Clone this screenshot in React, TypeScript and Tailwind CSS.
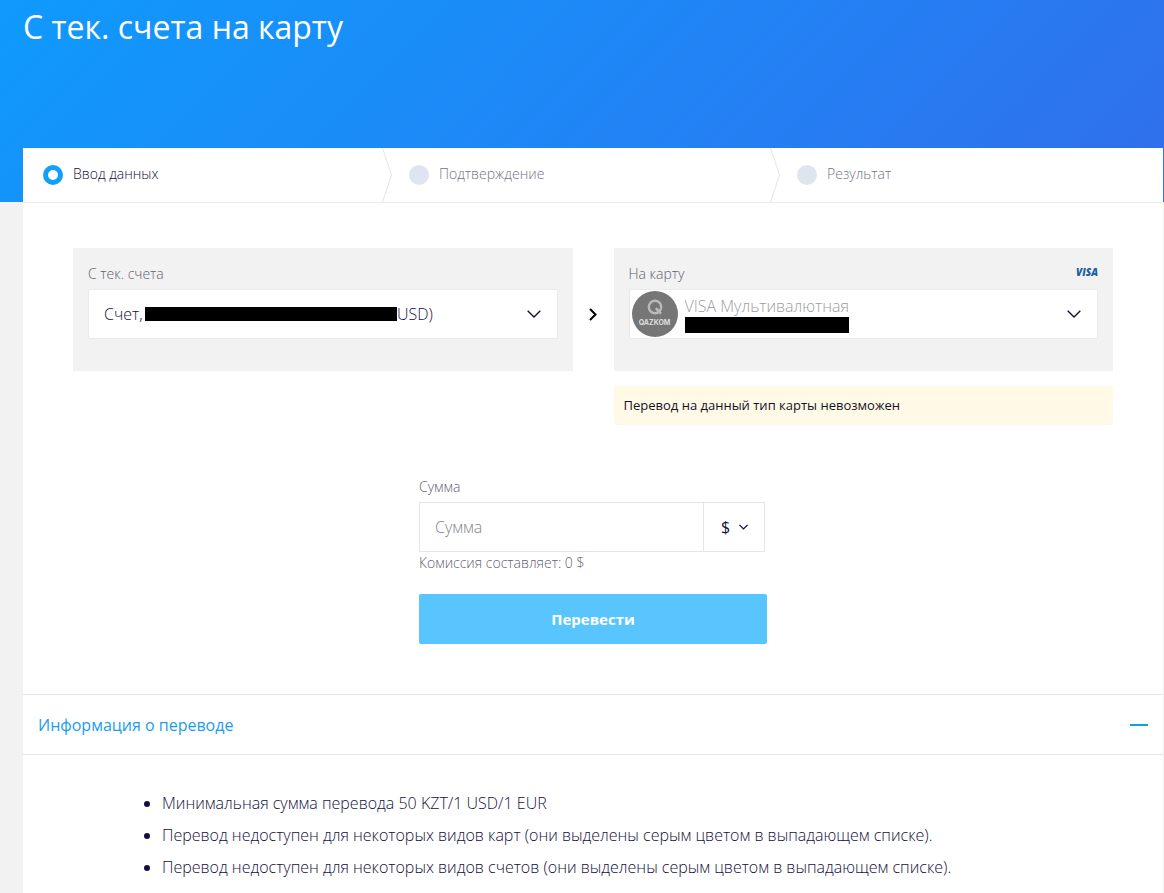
import { useState } from "react";

interface StepProps {
  title: string;
  active?: boolean;
  last?: boolean;
}

const steps: StepProps[] = [
  { title: "Ввод данных", active: true },
  { title: "Подтверждение" },
  { title: "Результат", last: true },
];

const notes = [
  "Минимальная сумма перевода 50 KZT/1 USD/1 EUR",
  "Перевод недоступен для некоторых видов карт (они выделены серым цветом в выпадающем списке).",
  "Перевод недоступен для некоторых видов счетов (они выделены серым цветом в выпадающем списке).",
];

function Step({ title, active, last }: StepProps) {
  return (
    <li className="relative flex items-center h-[54px] pl-5 not-first:pl-[26px]">
      {active ? (
        <span className="w-5 h-5 rounded-full border-[5px] border-[#109ffb] bg-white" />
      ) : (
        <span className="w-5 h-5 rounded-full bg-[#dfe5f0]" />
      )}
      <span
        className={
          active
            ? "pl-[10px] pb-0.5 text-sm text-[#14103c]"
            : "pl-[10px] pb-0.5 text-sm text-[#74738a]"
        }
      >
        {title}
      </span>
      {!last && (
        <svg
          className="absolute top-0 -right-[10px] w-[11px] h-[54px]"
          viewBox="0 0 11 54"
          fill="none"
        >
          <path d="M0.5 0L9.5 27L0.5 54" stroke="#e4e5e9" />
        </svg>
      )}
    </li>
  );
}

function Chevron({ className }: { className: string }) {
  return (
    <svg className={className} viewBox="0 0 14 8" fill="none">
      <path d="M0.7 0.7L7 7L13.3 0.7" stroke="currentColor" strokeWidth="1.4" />
    </svg>
  );
}

function BankLogo() {
  return (
    <span className="flex flex-col items-center w-[46px] h-[46px] pt-2 rounded-full bg-[#767676] text-[#dcdcdc]">
      <svg className="w-4 h-4" viewBox="0 0 16 16" fill="none">
        <circle cx="8" cy="8" r="6.2" stroke="#b9b9b9" strokeWidth="2.4" />
        <path d="M8.8 9.2L14 14.6" stroke="#b9b9b9" strokeWidth="2.6" />
      </svg>
      <span className="pt-px font-[Inter] text-[7px] leading-[14px] font-bold">
        QAZKOM
      </span>
    </span>
  );
}

export default function App() {
  const [amount, setAmount] = useState("");
  const [open, setOpen] = useState(true);

  return (
    <div className="flex flex-col min-h-screen bg-[#f2f2f2] font-['Open_Sans','Noto_Sans',sans-serif] font-light text-[#14103c]">
      <header className="h-[202px] pl-[23px] pt-1 bg-[linear-gradient(135deg,#0f9afd_0%,#1f86f6_50%,#316eec_100%)]">
        <h1 className="text-[32px] leading-[46px] font-normal text-white">
          С тек. счета на карту
        </h1>
      </header>

      <main className="flex-1 -mt-[54px] ml-[23px] mr-px bg-white">
        <ol className="grid grid-cols-[360fr_388fr_392fr] border-b border-[#e9eaec]">
          {steps.map((step) => (
            <Step key={step.title} {...step} />
          ))}
        </ol>

        <form onSubmit={(e) => e.preventDefault()}>
          <div className="grid grid-cols-[1fr_41px_1fr] px-[50px] pt-[45px]">
            <div className="self-start h-[123px] px-[15px] pt-4 bg-[#f2f2f2]">
              <label
                htmlFor="from"
                className="block text-sm leading-5 text-[#636174]"
              >
                С тек. счета
              </label>
              <div className="relative mt-[5px]">
                <select
                  id="from"
                  className="block w-full h-[50px] pl-[15px] appearance-none rounded-xs border border-[#ebebeb] bg-white text-base"
                >
                  <option>Счет,</option>
                </select>
                <div className="absolute inset-y-0 left-[57px] flex items-center text-base pointer-events-none">
                  <span className="w-[252px] h-[14px] bg-black" />
                  <span>USD)</span>
                </div>
                <Chevron className="absolute right-[17px] top-[21px] w-[14px] h-2 pointer-events-none" />
              </div>
            </div>

            <div className="flex justify-center pt-[60px]">
              <svg className="w-2 h-[13px]" viewBox="0 0 8 13" fill="none">
                <path d="M1 1L6.5 6.5L1 12" stroke="#000" strokeWidth="2" />
              </svg>
            </div>

            <div>
              <div className="h-[123px] px-[15px] pt-4 bg-[#f2f2f2]">
                <div className="flex justify-between">
                  <label
                    htmlFor="to"
                    className="text-sm leading-5 text-[#636174]"
                  >
                    На карту
                  </label>
                  <span className="text-[10px] leading-4 font-extrabold italic text-[#17609b]">
                    VISA
                  </span>
                </div>
                <div className="relative mt-[5px]">
                  <select
                    id="to"
                    className="block w-full h-[50px] pl-[55px] pb-4 appearance-none rounded-xs border border-[#ebebeb] bg-white text-base text-[#9c9ca2]"
                  >
                    <option>VISA Мультивалютная</option>
                  </select>
                  <div className="absolute top-[2px] left-[3px] flex items-end gap-[7px] pointer-events-none">
                    <BankLogo />
                    <span className="w-[164px] h-4 mb-1 bg-black" />
                  </div>
                  <Chevron className="absolute right-[17px] top-[21px] w-[14px] h-2 pointer-events-none" />
                </div>
              </div>
              <p className="mt-[15px] px-[10px] rounded-xs bg-[#fff9e5] text-[13px] leading-[39px] font-normal text-[#14122b]">
                Перевод на данный тип карты невозможен
              </p>
            </div>
          </div>

          <div className="w-[348px] mx-auto pt-[52px] pb-[50px]">
            <label
              htmlFor="amount"
              className="block text-sm leading-5 text-[#636174]"
            >
              Сумма
            </label>
            <div className="flex h-[50px] mt-[5px] mr-0.5 border border-[#e6e6ea]">
              <input
                id="amount"
                value={amount}
                onChange={(e) => setAmount(e.target.value)}
                placeholder="Сумма"
                className="flex-1 min-w-0 px-[15px] text-base outline-none placeholder:text-[#85848a]"
              />
              <div className="relative w-[61px] border-l border-[#e6e6ea]">
                <select
                  aria-label="Валюта"
                  className="w-full h-full pl-[17px] appearance-none text-base font-normal"
                >
                  <option>$</option>
                </select>
                <Chevron className="absolute right-4 top-[21px] w-[9px] h-[6px] [&>path]:stroke-2 pointer-events-none" />
              </div>
            </div>
            <p className="text-sm leading-[22px] text-[#636174]">
              Комиссия составляет: 0 $
            </p>
            <button
              type="submit"
              className="w-full h-[50px] mt-5 rounded-xs bg-[#59c5ff] text-[15px] font-bold text-white"
            >
              Перевести
            </button>
          </div>
        </form>

        <section className="border-t border-[#e4e5e7]">
          <h2>
            <button
              type="button"
              aria-expanded={open}
              onClick={() => setOpen(!open)}
              className="flex items-center justify-between w-full h-[60px] px-[15px] border-b border-[#e4e5e7] text-base font-normal text-[#1d9cea]"
            >
              <span>Информация о переводе</span>
              <span className="w-[18px] h-[2px] bg-[#10a0df]" />
            </button>
          </h2>
          {open && (
            <ul className="pl-[139px] pt-8 list-disc text-base leading-8">
              {notes.map((note) => (
                <li key={note}>{note}</li>
              ))}
            </ul>
          )}
        </section>
      </main>
    </div>
  );
}
